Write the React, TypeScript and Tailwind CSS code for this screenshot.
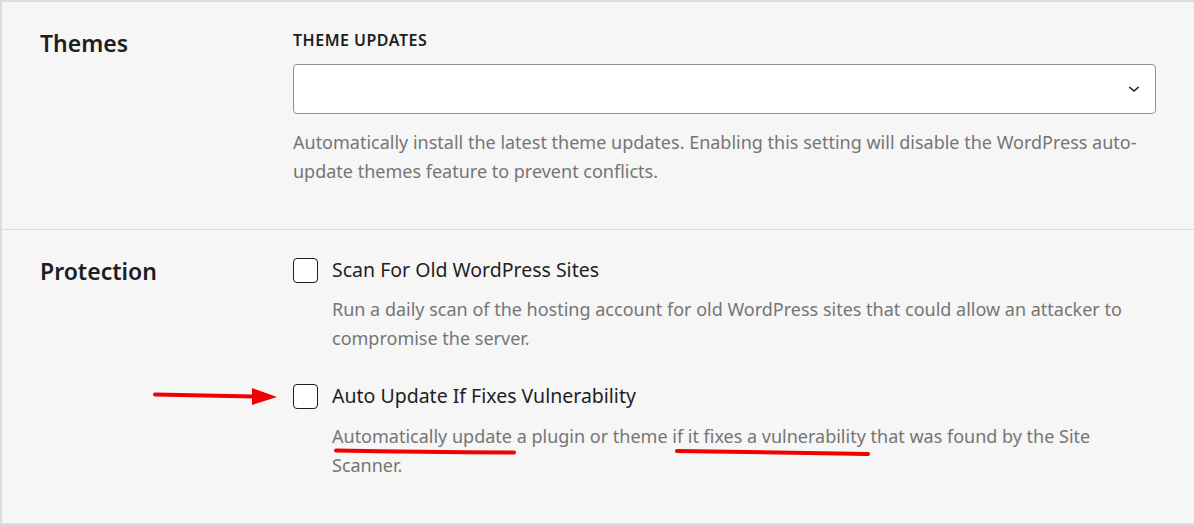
import React, { useState } from 'react';

const font = { fontFamily: '"Noto Sans", "Open Sans", sans-serif' };

const Checkbox: React.FC<{ checked: boolean; onChange: () => void }> = ({ checked, onChange }) => (
  <button
    onClick={onChange}
    className="w-[25px] h-[25px] shrink-0 rounded-[4px] border border-[#1e1e1e] bg-white flex items-center justify-center"
  >
    {checked && (
      <svg viewBox="0 0 24 24" className="w-5 h-5" fill="none" stroke="#1e1e1e" strokeWidth={2}>
        <path d="M5 12l5 5 9-10" />
      </svg>
    )}
  </button>
);

const App: React.FC = () => {
  const [scan, setScan] = useState(false);
  const [autoFix, setAutoFix] = useState(false);

  return (
    <div className="w-[1194px] h-[525px] bg-[#f6f6f6] overflow-hidden" style={font}>
      <div className="border-l-2 border-t-2 border-b-2 border-[#dcdcde] h-full flex flex-col">
        {/* Themes */}
        <div className="flex pt-[26px] pb-[43px] border-b border-[#dcdcde]">
          <div className="w-[291px] pl-[38px]">
            <h2 className="text-[23px] font-semibold text-[#1e1e1e] leading-[30px]">Themes</h2>
          </div>
          <div className="w-[863px]">
            <div className="text-[16px] font-semibold uppercase tracking-[0.5px] text-[#1e1e1e] leading-[24px]">Theme Updates</div>
            <div className="mt-[12px] h-[50px] bg-white border border-[#8c8f94] rounded-[4px] flex items-center justify-end pr-[13px]">
              <svg viewBox="0 0 24 24" className="w-[16px] h-[16px]" fill="none" stroke="#1e1e1e" strokeWidth={2.4}>
                <path d="M5 9l7 6 7-6" />
              </svg>
            </div>
            <p className="mt-[14px] text-[18px] leading-[29px] text-[#757575]">
              Automatically install the latest theme updates. Enabling this setting will disable the WordPress auto-update themes feature to prevent conflicts.
            </p>
          </div>
        </div>

        {/* Protection */}
        <div className="flex pt-[26px] flex-1 relative">
          <div className="w-[291px] pl-[38px]">
            <h2 className="text-[23px] font-semibold text-[#1e1e1e] leading-[30px]">Protection</h2>
          </div>
          <div className="w-[863px]">
            <div className="flex items-center gap-[14px] h-[28px]">
              <Checkbox checked={scan} onChange={() => setScan(!scan)} />
              <span className="text-[19.5px] text-[#1e1e1e]">Scan For Old WordPress Sites</span>
            </div>
            <p className="ml-[39px] mt-[11px] text-[18px] leading-[29px] text-[#757575]">
              Run a daily scan of the hosting account for old WordPress sites that could allow an attacker to compromise the server.
            </p>
            <div className="mt-[29px] flex items-center gap-[14px] h-[28px]">
              <Checkbox checked={autoFix} onChange={() => setAutoFix(!autoFix)} />
              <span className="text-[19.5px] text-[#1e1e1e]">Auto Update If Fixes Vulnerability</span>
            </div>
            <p className="ml-[39px] mt-[12px] text-[18px] leading-[29px] text-[#757575]">
              Automatically update a plugin or theme if it fixes a vulnerability that was found by the Site Scanner.
            </p>
          </div>

          {/* annotation marks */}
          <svg className="absolute left-0 top-0 pointer-events-none" width="1194" height="300" viewBox="0 229 1194 300">
            <path d="M153 393.5 L252 395.5" stroke="#f00000" strokeWidth={4} strokeLinecap="round" fill="none" />
            <path d="M250 387 L275 396 L250 404 Z" fill="#f00000" />
            <path d="M334 449.5 Q420 451 512 451.5" stroke="#f00000" strokeWidth={4} strokeLinecap="round" fill="none" />
            <path d="M675 450 Q770 451.5 866 453" stroke="#f00000" strokeWidth={4} strokeLinecap="round" fill="none" />
          </svg>
        </div>
      </div>
    </div>
  );
};

export default App;
